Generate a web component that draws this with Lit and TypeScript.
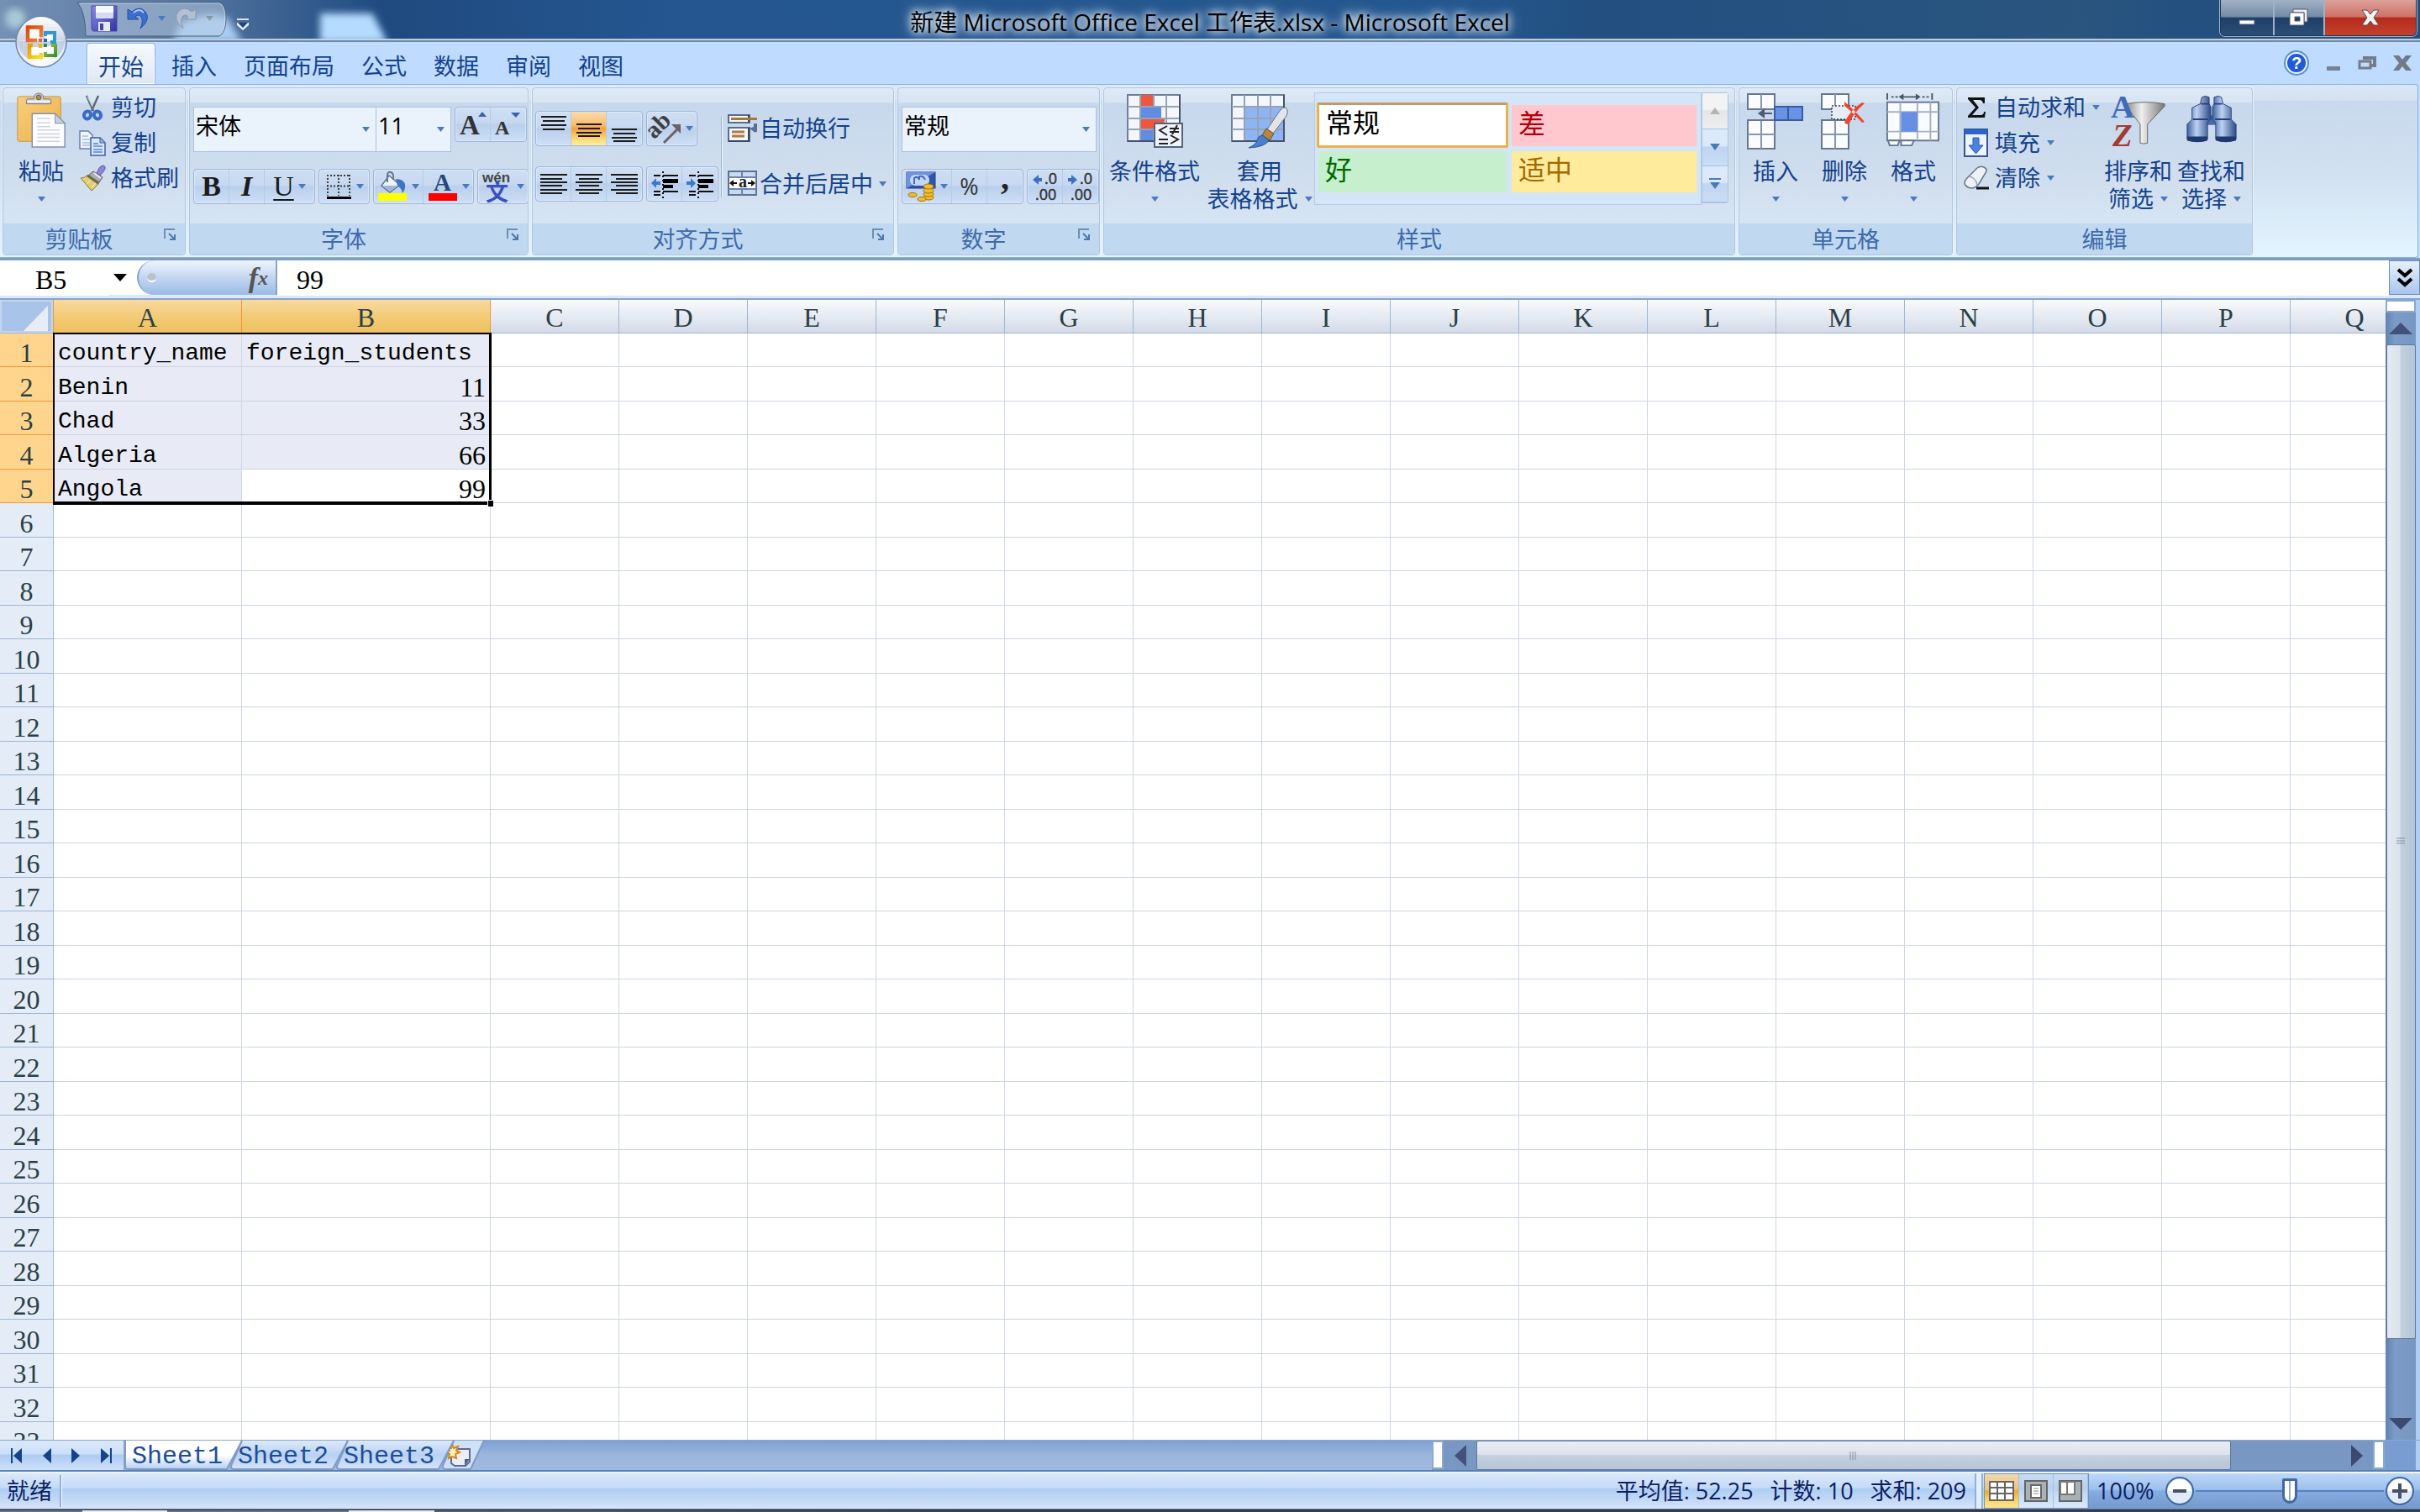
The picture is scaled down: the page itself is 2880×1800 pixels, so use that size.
import { LitElement, html, svg, css, nothing } from "lit";
import { customElement } from "lit/decorators.js";
import { classMap } from "lit/directives/class-map.js";

const COLUMNS = "ABCDEFGHIJKLMNOPQ".split("");
const ROW_COUNT = 33;
const DATA: [string, string | number][] = [
  ["country_name", "foreign_students"],
  ["Benin", 11],
  ["Chad", 33],
  ["Algeria", 66],
  ["Angola", 99],
];
const TABS = ["开始", "插入", "页面布局", "公式", "数据", "审阅", "视图"];

const caret = html`<svg class="caret" width="9" height="6" viewBox="0 0 9 6"><path d="M0 0h9L4.500 6z" fill="#4a7abb"/></svg>`;

/* Horizontal text-line glyphs, each entry is [x, y, width]. */
const lines = (rows: number[][]) => html`<svg width="34" height="34" viewBox="0 0 34 34">
  ${rows.map(([x, y, w]) => svg`<rect x=${x} y=${y} width=${w} height="2" fill="#1c1c1c"/>`)}
</svg>`;

const vTop = lines([[2, 2, 30], [4, 7, 26], [2, 12, 30], [4, 17, 26]]);
const vMid = lines([[2, 11, 30], [4, 16, 26], [2, 21, 30], [4, 25, 26]]);
const vBot = lines([[2, 17, 30], [4, 22, 26], [2, 27, 30], [4, 31, 26]]);
const hRows = [5, 10, 14, 18, 23, 27];
const hLeft = lines(hRows.map((y, i) => [1, y, i % 2 ? 26 : 32]));
const hMid = lines(hRows.map((y, i) => (i % 2 ? [5, y, 24] : [1, y, 32])));
const hRight = lines(hRows.map((y, i) => (i % 2 ? [7, y, 26] : [1, y, 32])));

const officeLogo = html`<svg width="62" height="62" viewBox="0 0 62 62">
  <defs>
    <radialGradient id="ob" cx=".5" cy=".8" r=".8"><stop offset="0" stop-color="#fff"/><stop offset=".5" stop-color="#eef1f6"/><stop offset="1" stop-color="#aab9d2"/></radialGradient>
    <linearGradient id="og" x1="0" y1="0" x2="0" y2="1"><stop offset="0" stop-color="#fff"/><stop offset="1" stop-color="#cfd6e4"/></linearGradient>
    <linearGradient id="or" x1="0" y1="0" x2="1" y2="1"><stop offset="0" stop-color="#d9480f"/><stop offset="1" stop-color="#f5853c"/></linearGradient>
    <linearGradient id="oy" x1="0" y1="0" x2="1" y2="1"><stop offset="0" stop-color="#ee9c00"/><stop offset="1" stop-color="#ffd91f"/></linearGradient>
    <linearGradient id="ogr" x1="0" y1="0" x2="1" y2="1"><stop offset="0" stop-color="#9ccb3b"/><stop offset="1" stop-color="#3f8f35"/></linearGradient>
  </defs>
  <circle cx="31" cy="31" r="30" fill="url(#ob)" stroke="#7287ab" stroke-width="1.500"/>
  <path d="M3 29a28 28 0 0 1 56 0z" fill="url(#og)"/>
  <path d="M3 30h56q-2 15-12 21-3-14-16-14T15 51Q5 45 3 30z" fill="#b9c7e0" opacity=".75"/>
  <path d="M17 16h12v12H17zM36 21h9v8h-9zM19 37h10v11H19zM35 36h11v10H35z" fill="#fff"/>
  <g fill="none">
    <path d="M26 29H15V13.500h16V25" stroke="url(#or)" stroke-width="4.500"/>
    <path d="M36 24v-4h11v11h-5" stroke="#2e97d6" stroke-width="4"/>
    <path d="M21 35h-4v14h14v-5" stroke="url(#oy)" stroke-width="4.500"/>
    <path d="M43 35h5v12H36v-4" stroke="url(#ogr)" stroke-width="4"/>
  </g>
  <path d="M28 27h4v4h-4z" fill="#e8622a"/><path d="M34 27h4v4h-4z" fill="#1c68b8"/><path d="M28 33h4v5h-4z" fill="#f7b500"/><path d="M34 33h4v4h-4z" fill="#2f8a3c"/>
</svg>`;

const saveIcon = html`<svg width="32" height="32" viewBox="0 0 32 32">
  <defs><linearGradient id="sv" x1="0" x2="1" y1="0" y2="1"><stop offset="0" stop-color="#8a8be0"/><stop offset=".5" stop-color="#5c60c8"/><stop offset="1" stop-color="#33349c"/></linearGradient></defs>
  <path d="M1 1h30v30H3l-2-2z" fill="url(#sv)" stroke="#4446a4"/>
  <path d="M6 1h21v13q0 2-2 2H8q-2 0-2-2z" fill="#f7f9fe"/><path d="M6 9h21v5q0 2-2 2H8q-2 0-2-2z" fill="#d5dcf0"/>
  <path d="M9 20h14v11H9z" fill="#e6e8f3"/><path d="M11 22h4v8h-4z" fill="#4144a0"/>
</svg>`;
const undoIcon = html`<svg width="26" height="26" viewBox="0 0 26 26">
  <path d="M1 2l5 3Q15-3 22 5q7 9-6 20 4-9 1-14-3-4-7 0l4 3H1z" fill="#3b6fcf" stroke="#2450a4"/><path d="M8 6q7-6 12 0" stroke="#a9c4f2" stroke-width="2" fill="none"/>
</svg>`;
const redoIcon = html`<svg width="26" height="26" viewBox="0 0 26 26">
  <path d="M25 2l-5 3Q11-3 4 5q-7 9 6 20Q6 16 9 11q3-4 7 0l-4 3h13z" fill="#b3c0d2" stroke="#8797b0"/>
</svg>`;

const pasteIcon = html`<svg width="62" height="68" viewBox="0 0 62 68">
  <defs><linearGradient id="pb" x1="0" y1="0" x2="1" y2="1"><stop offset="0" stop-color="#f9cf7c"/><stop offset="1" stop-color="#eab04a"/></linearGradient></defs>
  <rect x="2" y="4" width="53" height="55" rx="2" fill="url(#pb)" stroke="#c2954a"/>
  <path d="M13 13V9q0-2 2-2h7q0-7 6-7t6 7h7q2 0 2 2v4z" fill="#c9ced6" stroke="#6f7883"/><circle cx="28" cy="5" r="3" fill="#b98a3c" stroke="#6f5a35"/><path d="M14 9h28v2H14z" fill="#f8f9fb"/>
  <path d="M20 25h28l12 12v29H20z" fill="#fdfdff" stroke="#8391a8" stroke-width="1.500"/><path d="M48 25v12h12z" fill="#c5d0e0" stroke="#8391a8"/>
  <path d="M26 31h16M26 36h16M26 41h16M26 45h28M26 50h28M26 54h28M26 59h28" stroke="#cfd3dc" stroke-width="1.500"/>
</svg>`;
const cutIcon = html`<svg width="32" height="32" viewBox="0 0 32 32">
  <path d="M9 2l8 18M23 2l-8 18" stroke="#5c6a7c" stroke-width="2.500"/><path d="M10 3l6 12" stroke="#dfe5ee"/>
  <ellipse cx="10" cy="25" rx="4" ry="4.500" transform="rotate(25 10 25)" fill="none" stroke="#3a6bcb" stroke-width="4"/>
  <ellipse cx="22" cy="25" rx="4" ry="4.500" transform="rotate(-25 22 25)" fill="none" stroke="#3a6bcb" stroke-width="4"/>
</svg>`;
const copyIcon = html`<svg width="32" height="32" viewBox="0 0 32 32">
  <path d="M1 2h10l5 5v16H1z" fill="#f2f6fe" stroke="#6a7fae" stroke-width="1.500"/><path d="M4 8h7M4 12h9M4 16h9M4 19h9" stroke="#7f9cdc"/>
  <path d="M14 10h11l6 6v15H14z" fill="#dbe7fc" stroke="#3c5f9f" stroke-width="1.500"/><path d="M25 10v6h6z" fill="#9db8ea" stroke="#3c5f9f"/><path d="M17 17h6M17 20h11M17 24h11M17 27h11" stroke="#5c86d0" stroke-width="1.500"/>
</svg>`;
const brushIcon = html`<svg width="32" height="32" viewBox="0 0 32 32">
  <path d="M21 10l3-6q2-3 5-3 3 1 2 4t-6 8z" fill="#8f86d2" stroke="#6259ab"/>
  <path d="M17 8l11 7-4 6-13-8z" fill="#a9aeb8" stroke="#55595f"/><path d="M18 10l8 6" stroke="#e9ecf2" stroke-width="2"/>
  <path d="M11 12l13 9q-3 5-9 10Q9 24 2 16q5 0 9-4z" fill="#e2cd74" stroke="#8b7a34"/><path d="M15 28l6-8M10 23l6-8" stroke="#faf0b8"/><path d="M11 12l13 9-1 3-14-10z" fill="#6d6a4a"/>
</svg>`;

const growA = (big: boolean) => html`<svg width="34" height="34" viewBox="0 0 34 34">
  <text x="1" y="29" font-family="Liberation Serif, serif" font-weight="700" font-size=${big ? 33 : 24} fill="#333">A</text>
  ${big ? svg`<path d="M23 8l5-6 5 6z" fill="#3b62b0"/>` : svg`<path d="M20 3h11l-5 6z" fill="#3b62b0"/>`}
</svg>`;
const borderIcon = html`<svg width="32" height="32" viewBox="0 0 32 32">
  <path d="M2 3h28M2 15.500h28M3 2v25M29 2v25M16 2v25" stroke="#3c3c3c" stroke-width="2" stroke-dasharray="2 2" fill="none"/>
  <path d="M2 28h29v3H2z" fill="#000"/>
</svg>`;
const fillIcon = html`<svg width="36" height="36" viewBox="0 0 36 36">
  <path d="M14 5l13 11-12 9L5 17z" fill="#eef3fa" stroke="#5c6f90" stroke-width="1.500"/><path d="M12 13V5q0-5 4-4t3 9" fill="none" stroke="#66748f" stroke-width="2"/>
  <path d="M22 9q9 0 11 6 1 6-3 11-1-6-6-9z" fill="#3f74c6"/><path d="M7 17h18l-10 7z" fill="#9db7e2"/>
  <path d="M1 26h34v9H1z" fill="#ff0"/>
</svg>`;
const fontColorIcon = html`<svg width="36" height="36" viewBox="0 0 36 36">
  <text x="7" y="23" font-family="Liberation Serif, serif" font-weight="700" font-size="29" fill="#27467f">A</text><path d="M1 26h34v9H1z" fill="red"/>
</svg>`;
const wenIcon = html`<svg width="36" height="36" viewBox="0 0 36 36">
  <text x="0" y="13" font-family="Liberation Sans, sans-serif" font-weight="700" font-size="17" fill="#444">wén</text>
  <text x="4" y="35" font-family="Noto Sans CJK SC, sans-serif" font-weight="700" font-size="27" fill="#3a4fc0">文</text>
</svg>`;
const orientIcon = html`<svg width="36" height="36" viewBox="0 0 36 36">
  <g transform="rotate(-45 14 18)"><text x="-3" y="20" font-family="Liberation Serif, serif" font-weight="700" font-size="29" fill="#3f3f3f">ab</text></g>
  <path d="M15 35L31 19" stroke="#6b6168" stroke-width="3"/><path d="M24 13h11v11z" fill="#6b6168"/>
</svg>`;
const indentIcon = (right: boolean) => html`<svg width="34" height="34" viewBox="0 0 34 34">
  <path d="M4 7h8M15 7h18M4 26h8M15 26h18M4 30h8" stroke="#111" stroke-width="2"/><path d="M15 11h18v5H15zM15 18h12v4H15z" fill="#000"/><path d="M15 2v32" stroke="#111" stroke-width="2" stroke-dasharray="2 3"/>
  ${right ? svg`<path d="M1 14h5v-4l6 6-6 6v-4H1z" fill="#3b78d2"/>` : svg`<path d="M12 14H7v-4l-6 6 6 6v-4h5z" fill="#3b78d2"/>`}
</svg>`;
const wrapIcon = html`<svg width="36" height="34" viewBox="0 0 36 34">
  <rect x="1" y="1" width="25" height="9" fill="#f4f7fb" stroke="#5a6d88" stroke-width="2"/><path d="M25 1v9" stroke="#38485f" stroke-width="2"/><path d="M4 5.500h31" stroke="#a9743e" stroke-width="3"/>
  <rect x="1" y="16" width="25" height="16" fill="#f4f7fb" stroke="#5a6d88" stroke-width="2"/><path d="M25 16v16H1" fill="none" stroke="#38485f" stroke-width="2"/><path d="M5 21h15M5 26h15" stroke="#b07a48" stroke-width="3"/>
  <path d="M33 11v8h-2" stroke="#5a6f92" stroke-width="4" fill="none"/><path d="M26 17l7-3v8z" fill="#5a6f92"/>
</svg>`;
const mergeIcon = html`<svg width="36" height="32" viewBox="0 0 36 32">
  <rect x="1" y="1" width="33" height="28" fill="#fff" stroke="#5d7290" stroke-width="2"/><path d="M2 2h31v5H2zM2 23h31v5H2z" fill="#c7daf2"/><path d="M1 8h33M1 22h33M17 1v7M17 22v7" stroke="#6b84a8" stroke-width="2"/>
  <path d="M2 15l5-4v3h4v2H7v3zM33 15l-5-4v3h-4v2h4v3z" fill="#111"/>
  <text x="13" y="20" font-family="Liberation Serif, serif" font-weight="700" font-size="20" fill="#222">a</text>
</svg>`;
const moneyIcon = html`<svg width="36" height="36" viewBox="0 0 36 36">
  <rect x="1" y="1" width="34" height="19" fill="#2f55ad" stroke="#23418c"/><path d="M1 1l34 0-34 19z" fill="#6d93dc"/><rect x="5" y="4" width="23" height="13" rx="6" fill="#c4d6f4"/><path d="M10 15V8q4-3 6 2v-4q5-1 7 4" fill="none" stroke="#4469b8" stroke-width="2"/>
  <g fill="#f0bd2e" stroke="#a4720d"><ellipse cx="27" cy="31" rx="6" ry="3"/><ellipse cx="27" cy="27" rx="6" ry="3"/><ellipse cx="27" cy="23" rx="6" ry="3"/><ellipse cx="27" cy="18" rx="6" ry="3"/><ellipse cx="19" cy="33" rx="5" ry="2.500"/><ellipse cx="8" cy="28" rx="5" ry="2.500"/></g>
</svg>`;
const decimalIcon = (right: boolean) => html`<svg width="34" height="36" viewBox="0 0 34 36">
  <g font-family="Open Sans, sans-serif" font-size="18" fill="#333" stroke="#333" stroke-width=".5"><text x="16" y="15">.0</text><text x="5" y="34">.00</text></g>
  ${right ? svg`<path d="M2 8h4V4l7 6-7 6v-4H2z" fill="#3b6fc9"/>` : svg`<path d="M13 8H9V4l-7 6 7 6v-4h4z" fill="#3b6fc9"/>`}
</svg>`;

const gridBase = svg`<rect x="2" y="2" width="62" height="55" fill="#f3f6fb" stroke="#6c7f99" stroke-width="2"/>`;
const gridLines = svg`<path d="M17 2v55M33 2v55M48 2v55M2 16h62M2 30h62M2 43h62" stroke="#94a3b8" stroke-width="2"/><path d="M64 2v55H2" fill="none" stroke="#43536b" stroke-width="2"/>`;
const condIcon = html`<svg width="68" height="66" viewBox="0 0 68 66">
  ${gridBase}${gridLines}<path d="M18 2h14v13H18zM18 31h28v11H18z" fill="#f0553f"/><path d="M18 17h24v12H18zM18 44h14v12H18z" fill="#5f8de6"/>
  <rect x="34" y="36" width="33" height="28" fill="#eff4fb" stroke="#51637f" stroke-width="2"/>
  <path d="M49 39l-9 5 9 6M53 50l9 5-9 5M39 55h11M39 60h11M52 42h11M52 46h11M61 38l-6 11" stroke="#222" stroke-width="2" fill="none"/>
</svg>`;
const tableFormatIcon = html`<svg width="70" height="66" viewBox="0 0 70 66">
  ${gridBase}<path d="M17 16h47v41H17z" fill="#8fb4f4"/>${gridLines}
  <path d="M66 17q4 3 1 10L51 48l-7-5 15-22q3-5 7-4z" fill="#e2e4e8" stroke="#667085"/><path d="M43 42l9 6-5 8-9-6z" fill="#b58543" stroke="#704c1e"/>
  <path d="M38 50l8 6q-4 8-24 9 9-4 10-9 1-5 6-6z" fill="#4c7dcf" stroke="#2a559c"/>
</svg>`;
const cellBox = (x: number, y: number, r: number) => svg`<rect x=${x} y=${y} width="32" height=${r === 1 ? 18 : 34} transform=${r === 1 ? "translate(0 0)" : "translate(0 -1)"} fill="#fafcff" stroke="#66788f" stroke-width="2"/><path d=${`M${x + 16} ${y}v${r === 1 ? 18 : 33}` + (r > 1 ? `M${x} ${y + 16}h32` : "")} stroke="#8696ab" stroke-width="2"/>`;
const insertIcon = html`<svg width="70" height="66" viewBox="0 0 70 66">${cellBox(2, 1, 1)}${cellBox(2, 33, 2)}
  <rect x="34" y="16" width="33" height="16" fill="#6793e6" stroke="#3b5c9c" stroke-width="2"/><path d="M50 16v16" stroke="#3b5c9c" stroke-width="2"/><path d="M31 25v-2h-9v-5l-8 6 8 6v-5z" fill="#4c5d78"/></svg>`;
const deleteIcon = html`<svg width="70" height="66" viewBox="0 0 70 66">${cellBox(8, 1, 1)}${cellBox(8, 33, 2)}
  <path d="M20 15h28v16H20z" fill="#e6edf7" stroke="#333c4c" stroke-width="1.500" stroke-dasharray="2 2"/><path d="M35 10q10 8 24 24l-3 1Q44 22 35 15zM59 12l-3-1Q42 20 35 35q2 3 6 1 4-12 18-24z" fill="#ee452c"/></svg>`;
const formatIcon = html`<svg width="70" height="68" viewBox="0 0 70 68">
  <path d="M3 0v8M58 0v8" stroke="#46566e" stroke-width="2"/><path d="M8 4.500h8M46 4.500h8" stroke="#46566e" stroke-width="2" stroke-dasharray="3 2"/><path d="M17 4.500l6-4v3h15v-3l6 4-6 4v-3H23v3z" fill="#46566e"/>
  <rect x="3" y="11" width="63" height="47" fill="#fafcff" stroke="#66788f" stroke-width="2"/><path d="M19 11v47M40 11v47M56 11v47M3 23h63M3 47h63" stroke="#a4b1c3" stroke-width="2"/>
  <rect x="20" y="23" width="20" height="24" fill="#6590e4"/><path d="M4 58h14l-2 6H6zM20 58h16l-3 6H20z" fill="#fafcff" stroke="#66788f" stroke-width="2"/></svg>`;
const sumIcon = html`<svg width="32" height="32" viewBox="0 0 32 32"><path d="M6 4h20v7h-2q-1-4-4-4h-8l7 9-8 9h10q4 0 4-4h2l-1 7H6v-2l9-10L6 6z" fill="#111"/></svg>`;
const fillDownIcon = html`<svg width="32" height="34" viewBox="0 0 32 34"><rect x="2" y="1" width="27" height="32" fill="#eef4fd" stroke="#35558c" stroke-width="2"/><path d="M2 1h27v6H2z" fill="#2b63cf"/><path d="M12 11h7v9h5l-8.500 10L7 20h5z" fill="#4c83e0" stroke="#2a58ad"/></svg>`;
const eraseIcon = html`<svg width="32" height="32" viewBox="0 0 32 32"><path d="M17 4q4-3 8-1t3 5l-9 15q-4 5-9 5-7-1-8-6 0-3 4-7z" fill="#eef1f6" stroke="#68758c" stroke-width="1.500"/><path d="M7 14q8 1 10 10" fill="none" stroke="#9da9bd" stroke-width="1.500"/><path d="M16 28h15" stroke="#111" stroke-width="3"/></svg>`;
const sortIcon = html`<svg width="68" height="68" viewBox="0 0 68 68">
  <defs><linearGradient id="fn" x1="0" x2="1"><stop offset="0" stop-color="#8f8f8f"/><stop offset=".4" stop-color="#efefef"/><stop offset="1" stop-color="#777"/></linearGradient></defs>
  <path d="M19 13q23-4 47 0v3L45 38v23q-5 2-9 0V38L19 16z" fill="url(#fn)" stroke="#666"/>
  <text x="0" y="30" font-family="Liberation Serif, serif" font-weight="700" font-size="40" fill="#3f6cb9">A</text>
  <text x="2" y="65" font-family="Liberation Serif, serif" font-weight="700" font-style="italic" font-size="40" fill="#a33a34">Z</text>
</svg>`;
const findIcon = html`<svg width="64" height="68" viewBox="0 0 64 68">
  <defs><linearGradient id="bn" x1="0" x2="1"><stop offset="0" stop-color="#40619f"/><stop offset=".4" stop-color="#bdd2f3"/><stop offset="1" stop-color="#2b4a86"/></linearGradient></defs>
  <path d="M25 27h14v12H25z" fill="#4a6cab"/>
  <g stroke="#2b4478"><path fill="url(#bn)" d="M20 5q4-3 9 0v8l2 4v15l-4 4v20q-1 3-12 3T2 57V38l6-6V18l10-5z"/><path fill="url(#bn)" d="M44 5q-4-3-9 0v8l-2 4v15l4 4v20q1 3 12 3t13-3V38l-6-6V18l-10-5z"/></g>
  <path d="M2 53h25v5q-12 4-25 0zM37 53h25v5q-13 4-25 0z" fill="#1f3a70"/><path d="M19 13h10M35 13h10M9 32h19M36 32h19" stroke="#24417c" stroke-width="2"/>
</svg>`;
const launcher = html`<svg width="16" height="16" viewBox="0 0 16 16"><path d="M2 13V2h12" fill="none" stroke="#6a8fb8" stroke-width="2"/><path d="M7 7l7 7M14 8v6H8" stroke="#4f78a8" stroke-width="2" fill="none"/></svg>`;

@customElement("app-root")
export class AppRoot extends LitElement {
  static styles = css`
    :host { display: block; font: 27px/34px "Open Sans", "Noto Sans CJK SC", sans-serif; color: #15428b; }
    * { box-sizing: border-box; }
    button, input, select { font: inherit; color: inherit; border: 0; margin: 0; padding: 0; background: none; border-radius: 0; outline: 0; }
    button { display: flex; align-items: center; justify-content: center; white-space: nowrap; }
    svg { display: block; flex: none; overflow: visible; }
    .app { display: flex; flex-direction: column; height: 100vh; overflow: hidden; background: #bfdbff; }

    .title { position: relative; display: flex; justify-content: space-between; align-items: flex-start; height: 50px; overflow: hidden; background: linear-gradient(90deg, #7590b4 0, #4f719d 250px, #1f4a80 460px, #25568f 800px, #24578f 60%, #224f80 66%, #29557f 86%, #23507f 90%); border-bottom: 2px solid #72889c; box-shadow: inset 0 -2px 0 #b8cde0; }
    .scene { position: absolute; left: 0; top: 0; }
    .qat { position: relative; display: flex; align-items: center; gap: 11px; height: 46px; margin-left: 92px; width: 178px; padding: 0 0 2px 16px; }
    .qat .dim { opacity: .45; }
    .qatmore { position: relative; margin: 21px auto 0 12px; }
    .name { position: absolute; left: 0; right: 0; top: 9px; margin: 0; text-align: center; font-size: 28px; font-weight: 400; line-height: 34px; color: #000; text-shadow: 0 0 8px #fff, 0 0 12px #dce9f7, 0 0 18px #c2d8ee; }
    .win { position: relative; display: flex; height: 43px; margin-right: 4px; border: 1px solid #20354f; border-top: 0; border-radius: 0 0 6px 6px; overflow: hidden; box-shadow: 0 0 0 1px #9cb3cc; }
    .win button { height: 100%; width: 64px; border-right: 2px solid #9fb2c8; background: linear-gradient(#a3b2c5, #7389a5 48%, #1e3e66 50%, #2b4f78); }
    .win .max { width: 60px; }
    .win .close { width: 108px; border-right: 0; background: linear-gradient(#dda19a, #cd7167 48%, #b52a1b 50%, #c5402d); }

    .tabs { position: relative; display: flex; align-items: flex-end; height: 50px; flex: none; padding-left: 103px; gap: 6px; background: #bfdbff; }
    .tab { height: 50px; padding: 8px 13px 0; color: #15428b; border-radius: 4px 4px 0 0; }
    .tab.on { height: 49px; border: 1px solid #8db2e3; border-bottom: 0; background: linear-gradient(#f6faff, #dde8f5); box-shadow: inset 0 0 0 1px #fff; }
    .mdi { display: flex; align-items: center; gap: 20px; margin: 0 10px 10px auto; }
    .orb { position: absolute; z-index: 2; left: 18px; top: -31px; }

    .ribbon { display: flex; flex: none; gap: 4px; height: 207px; margin-right: 2px; padding: 3px 3px 2px; border: 1px solid #8db2e3; border-width: 1px 1px 1px 0; border-radius: 0 4px 4px 0; background: linear-gradient(#dbe7f5, #d5e1f0 18px, #c9d9ed 20px, #d2e1f1 110px, #e3f5ff); }
    .group { display: flex; flex-direction: column; height: 200px; border: 1px solid #adc6df; border-radius: 4px; overflow: hidden; box-shadow: 0 0 0 1px #e6f1fb; background: linear-gradient(#dfeaf6, #d8e4f2 17px, #c7d8ed 18px, #d0deee 110px, #dae9f6); }
    .body { display: flex; flex: 1; min-height: 0; align-items: flex-start; }
    .cap { position: relative; display: flex; flex: none; align-items: center; justify-content: center; height: 37px; background: #c1d8f1; color: #3e6aaa; }
    .cap button { position: absolute; right: 10px; top: 5px; }
    .cap.launch { padding-right: 36px; }
    .w-clip { width: 218px; } .w-font { width: 404px; } .w-align { width: 431px; } .w-num { width: 241px; }
    .w-style { width: 752px; } .w-cells { width: 255px; } .w-edit { width: 353px; }
    .w-cells .body { padding-left: 2px; }

    .big { flex-direction: column; padding-top: 6px; line-height: 33px; }
    .big > svg:first-child { height: 66px; margin-bottom: 10px; }
    .big > .caret { margin-top: 14px; }
    .row2 { display: flex; align-items: center; gap: 8px; }
    .paste { width: 90px; } .b-cond { width: 120px; } .b-table { width: 130px; } .b-cell { width: 82px; } .b-find { width: 87px; }
    .list { display: flex; flex-direction: column; padding-top: 2px; }
    .list button { height: 42px; gap: 6px; justify-content: flex-start; }
    .list .caret { margin-left: 2px; }
    .edit { width: 172px; padding-left: 7px; }

    .stack { display: flex; flex-direction: column; }
    .f-font { padding: 22px 0 0 4px; gap: 20px; }
    .f-align { padding: 27px 0 0 3px; gap: 24px; }
    .line { display: flex; align-items: flex-start; gap: 4px; }
    .sels { display: flex; height: 54px; }
    .sel { display: grid; height: 54px; border: 1px solid #abc1de; background: #eaf2fb; }
    .sel select { grid-area: 1 / 1; width: 100%; appearance: none; padding: 0 0 8px 2px; color: #000; }
    .sel .caret { grid-area: 1 / 1; align-self: center; justify-self: end; margin-right: 7px; pointer-events: none; }
    .s1 { width: 218px; } .s2 { width: 89px; border-left: 0; } .s3 { width: 232px; }
    .pack { display: flex; height: 42px; border: 1px solid #9ab6dd; border-radius: 4px; background: linear-gradient(#cfdff3, #c6d8f0 46%, #bacfec 50%, #cddff5); box-shadow: inset 0 0 0 1px rgba(255,255,255,.35); }
    .pack button { height: 100%; min-width: 42px; gap: 5px; border-right: 1px solid #b5cbe8; }
    .pack button:last-child { border-right: 0; }
    .pack .wide { width: 59px; }
    .pack .lit { background: linear-gradient(#fbdbb0, #f9bd6c 40%, #f5a13a 50%, #fddf7f 85%, #ffeea0); }
    .b, .i, .u { font: 700 34px/38px "Liberation Serif", serif; color: #1b1b1b; }
    .i { font-style: italic; } .u { font-weight: 400; text-decoration: underline; text-decoration-thickness: 2px; text-underline-offset: 4px; }
    .pct { color: #333; }
    .comma { font: 700 40px/8px "Liberation Serif", serif; color: #222; align-items: flex-start; padding-top: 6px; }
    .rule { width: 2px; height: 96px; margin: 34px 6px 0 3px; background: #9ab5da; border-right: 1px solid #eef5fc; }
    .f-text { padding: 27px 0 0; gap: 24px; }
    .txt { height: 42px; gap: 2px; justify-content: flex-start; }
    .txt .caret { margin-left: 5px; }

    .gallery { display: grid; grid-template: 51px 51px / 228px 1fr; align-content: center; column-gap: 2px; row-gap: 4px; flex: 1; height: 134px; margin: 5px 0 0; padding: 0 3px 0 2px; border: 1px solid #b5cdea; background: #d4e5f7; }
    .gallery button { justify-content: flex-start; margin: 1px 2px; padding: 0 0 6px 8px; font-size: 32px; color: #000; background: #fff; }
    .gallery .sel-style { margin: -2px 0 -1px; padding-left: 8px; border: 3px solid #f0b04a; border-top-color: #c39a68; border-radius: 3px; }
    .gallery .bad { color: #b0000c; background: #ffc7ce; }
    .gallery .good { color: #006a00; background: #c6efce; }
    .gallery .neutral { color: #a26a00; background: #ffeb9c; }
    .gscroll { display: flex; flex-direction: column; width: 32px; height: 132px; margin: 5px 7px 0 0; border: 1px solid #a9c3e6; border-radius: 0 3px 3px 0; }
    .gscroll button { flex: 1; background: linear-gradient(#dce9fa 45%, #c0d5f1 50%, #cbddf5); border-bottom: 1px solid #a9c3e6; }
    .gscroll button:first-child { background: linear-gradient(#f3f3f3 45%, #e4e6e9 50%, #eee); }

    .fbar { display: flex; flex: none; height: 50px; padding-bottom: 4px; border-top: 3px solid #7d9dc6; border-bottom: 2px solid #86a5cc; background: #dbe8f8; }
    .fbar input { font: 32px/40px "Liberation Serif", serif; color: #000; background: #fff; height: 42px; padding-top: 4px; }
    .fbar .nb { width: 130px; padding-left: 42px; }
    .nbtn { width: 33px; padding-right: 8px; background: #fff; }
    .pillwrap { width: 167px; background: #fff; display: flex; border-right: 2px solid #86a5cc; }
    .pill { display: flex; flex: 1; align-items: center; justify-content: space-between; padding: 0 9px 0 10px; border-left: 2px solid #86a5cc; border-radius: 21px 0 0 21px; background: linear-gradient(#eef5fd, #c3d6f0 50%, #9cbbe6); }
    .dot { width: 11px; height: 11px; border-radius: 50%; background: #b9c3d0; border-bottom: 2px solid #fff; }
    .fx { font: italic 700 34px/36px "Liberation Serif", serif; color: #555; }
    .fx small { font-size: 24px; }
    .fbar .fin { flex: 1; min-width: 0; padding-left: 23px; }
    .expand { width: 37px; border: 1px solid #6b8dbb; background: linear-gradient(#e8f1fc, #a9c5ec); }

    .main { display: flex; flex: 1; min-height: 0; background: #b0cdf3; }
    .sheet { position: relative; flex: 1; min-width: 0; overflow: hidden; background: #fff; }
    table { border-collapse: separate; border-spacing: 0; table-layout: fixed; width: 2879px; }
    .c-head { width: 64px; } .c-a { width: 224px; } .c-b { width: 296px; } .c-n { width: 153px; }
    th, td { padding: 0; overflow: hidden; white-space: nowrap; font: 32px/36px "Liberation Serif", serif; }
    thead th { height: 40px; padding-top: 3px; color: #2b3f45; background: linear-gradient(#f8fafc, #e6ebf3 50%, #d3dbe9); border-right: 1px solid #9eb6d4; border-bottom: 1px solid #9eb6d4; }
    thead th.hot { background: linear-gradient(#f9d99f, #f2c970 60%, #eec062); border-color: #f29536; }
    thead th.corner { padding: 0; background: #a9c4e9; border-color: #f29536 #f29536 #9eb6d4; box-shadow: inset 0 0 0 2px #c2d6f1; }
    .corner svg { margin: 4px 0 0 27px; }
    tbody th { height: 40px; background: #e4ecf7; color: #2b3f45; border-right: 1px solid #9eb6d4; border-bottom: 1px solid #9eb6d4; line-height: 32px; vertical-align: bottom; }
    tbody tr:nth-child(even) th { height: 41px; }
    tbody th.hot { background: #ffd58d; border-color: #f29536; }
    td { border-right: 1px solid #d0d7e5; border-bottom: 1px solid #ccd4e3; color: #000; vertical-align: bottom; line-height: 32px; padding: 0 5px; }
    td.picked { background: #e8ebf5; }
    td.text { font-family: "Liberation Mono", monospace; font-size: 28px; line-height: 30px; }
    td.num { text-align: right; }
    .frame { position: absolute; left: 63px; top: 39px; width: 522px; height: 205px; border: 4px solid #000; border-width: 2px 3px 4px 2px; pointer-events: none; }
    .knob { position: absolute; right: -5px; bottom: -6px; width: 7px; height: 8px; background: #000; border: 1px solid #fff; border-width: 1px 0 0 1px; }

    .vs { display: flex; flex-direction: column; align-items: center; width: 36px; margin-right: 5px; background: linear-gradient(90deg, #5f82b1, #7c9bc6 30%, #7797c3); }
    .split { width: 100%; height: 15px; border: 2px solid #8aa9d0; background: #fff; }
    .vs button { height: 38px; width: 100%; }
    .vthumb { display: flex; align-items: center; justify-content: center; width: 35px; flex: 1184; border: 1px solid #6278a0; border-radius: 2px; background: linear-gradient(90deg, #e3e9f1, #dce3ed 45%, #c2cfde 50%, #b6c5d7); }
    .vrest { flex: 82; }

    .bottom { display: flex; flex: none; height: 38px; border-top: 1px solid #8aa6cc; border-bottom: 2px solid #5a80b5; background: linear-gradient(#7d9fd0, #9bb6dd 50%, #a0b9de); }
    .nav { display: flex; align-items: center; justify-content: space-between; width: 148px; padding: 0 14px 0 13px; background: linear-gradient(#dbe8fa, #cbdff9 45%, #aecbf3 50%, #cfe0f8); border-right: 1px solid #8aa6cc; }
    .st { position: relative; width: 126px; color: #1d4c98; font: 30px/34px "Liberation Mono", monospace; padding-top: 3px; }
    .st .shape { position: absolute; left: 0; top: 0; }
    .st span { position: relative; }
    .hs { display: flex; flex: none; margin-left: auto; width: calc(41% - 5px); background: #7897c3; }
    .hsplit { width: 14px; margin: 0 0 1px; border: 2px solid #8aa9d0; background: #fff; }
    .hs button { width: 39px; }
    .hthumb { display: flex; align-items: center; justify-content: center; flex: 898; border: 1px solid #6278a0; border-radius: 2px; background: linear-gradient(#e9edf3, #dde3ec 48%, #c5d1de 50%, #b5c4d6); }
    .hrest { flex: 130; }
    .endcap { width: 42px; background: linear-gradient(90deg, #7a9dd1 37px, #b0cdf3 37px); }

    .status { display: flex; align-items: center; flex: none; height: 45px; border-top: 2px solid #eef5ff; background: linear-gradient(#dbe8fb, #c6dbf8 40%, #aecdf4 45%, #c3d9f6 75%, #d6e4f6); color: #0c1e60; border-bottom: 1px solid #6d88ad; }
    .status .ready { padding: 0 9px 0 8px; border-right: 2px solid #8eb0dc; height: 38px; line-height: 38px; box-shadow: 1px 0 0 #fff; }
    .calc { display: flex; gap: 20px; margin-left: auto; padding-right: 10px; }
    .sepbar { width: 10px; align-self: stretch; background: #e3eefc; border: 2px solid #8eb0dc; border-width: 0 2px; margin-right: 1px; }
    .views { display: flex; align-self: stretch; border: 1px solid #6f92c4; }
    .views button { width: 41px; background: linear-gradient(#c8dbf4, #b9d0ee 45%, #bdd5f4 50%, #dbe9fb); border-right: 1px solid #a5c0e3; }
    .views button.lit { background: linear-gradient(#f2d7ac, #ecc37d 45%, #e9ab33 50%, #fbd66e 80%, #fde590); }
    .zoom { display: flex; align-items: center; align-self: stretch; padding: 0 6px 0 9px; background: linear-gradient(#bed7f8, #9dc0ee 45%, #85ace2 50%, #7499cf); }
    .zoom output { width: 81px; color: #0c1e60; }
    .zoom input { appearance: none; width: 224px; height: 32px; margin: 0 1px; background: linear-gradient(#5b82bb, #5b82bb) center / 100% 2px no-repeat; }
    .zoom input::-webkit-slider-thumb { appearance: none; width: 18px; height: 30px; border: 3px solid #44689d; border-radius: 2px 2px 9px 9px; background: linear-gradient(90deg, #fff 40%, #8fa9cf 40% 60%, #fff 60%); }
    .edge { flex: none; height: 3px; background: linear-gradient(90deg, #6b7786 98px, #e8ebee 98px 199px, #6b7786 199px 415px, #e8ebee 415px 517px, #5a6470 517px, #39434f 40%); border-top: 1px solid #222b36; }
  `;

  private group(cls: string, label: string, body: unknown, launch = true) {
    return html`<section class="group ${cls}" aria-label=${label}>
      <div class="body">${body}</div>
      <div class=${classMap({ cap: true, launch })}>
        <span>${label}</span>${launch ? html`<button aria-label="${label}选项">${launcher}</button>` : nothing}
      </div>
    </section>`;
  }

  private big(icon: unknown, width: string, first: string, second = "") {
    return html`<button class="big ${width}">${icon}<span>${first}</span>${second
      ? html`<span class="row2">${second}${caret}</span>` : caret}</button>`;
  }

  private sheetTab(name: string, active: boolean) {
    return html`<button class="st">
      <svg class="shape" width="144" height="36" viewBox="0 0 144 36">
        <defs><linearGradient id=${"t" + name} x1="0" y1="0" x2="0" y2="1">
          ${active ? svg`<stop offset=".5" stop-color="#fff"/><stop offset="1" stop-color="#b5d0f3"/>`
            : svg`<stop offset="0" stop-color="#dce9fa"/><stop offset=".5" stop-color="#b9d2f4"/><stop offset="1" stop-color="#d3e3f9"/>`}
        </linearGradient></defs>
        <path d=${active ? "M1 0V31q0 3 4 3H122L140 0" : "M14 0L1 30q-1 4 4 4H122L140 0"} fill=${`url(#t${name})`} stroke="#7f9cc6" stroke-width="2"/>
      </svg><span>${name}</span></button>`;
  }

  private row(r: number) {
    const entry = DATA[r];
    return html`<tr>
      <th scope="row" class=${classMap({ hot: !!entry })}>${r + 1}</th>
      ${COLUMNS.map((_, c) => {
        const value = entry?.[c];
        return html`<td class=${classMap({
          picked: c < 2 && !!entry && !(r === 4 && c === 1),
          text: typeof value === "string", num: typeof value === "number",
        })}>${value ?? nothing}</td>`;
      })}
    </tr>`;
  }

  render() {
    return html`<div class="app">
      <header class="title">
        <svg class="scene" width="520" height="50" viewBox="0 0 520 50">
          <defs><filter id="soft"><feGaussianBlur stdDeviation="4"/></filter></defs>
          <g filter="url(#soft)"><circle cx="18" cy="22" r="12" fill="#a9cbd8"/><path d="M205 50l10-22q30-16 55-8l18 30z" fill="#a8cdf2"/><path d="M381 50V16h62l18 34z" fill="#b5dcff"/></g>
          <path d="M92 3h170q7 3 7 19t-8 21H102Q102 14 92 3z" fill="#bccde4" fill-opacity=".5" stroke="#4b5f7c"/><path d="M95 4h166q7 3 7 18t-7 20" fill="none" stroke="#dfe9f5" stroke-opacity=".6"/>
        </svg>
        <div class="qat">
          <button aria-label="保存">${saveIcon}</button>
          <button aria-label="撤消">${undoIcon}</button>${caret}
          <button aria-label="恢复">${redoIcon}</button>
          <svg class="dim" width="9" height="6" viewBox="0 0 9 6"><path d="M0 0h9L4.500 6z" fill="#666"/></svg>
        </div>
        <button class="qatmore" aria-label="自定义快速访问工具栏"><svg width="14" height="16" viewBox="0 0 14 16"><path d="M0 2h14" stroke="#d7e3f0" stroke-width="2"/><path d="M0 6h14v3l-7 6-7-6z" fill="#e8f0f8"/><path d="M1 6h12l-6 6z" fill="#1d4380"/></svg></button>
        <h1 class="name">新建 Microsoft Office Excel 工作表.xlsx - Microsoft Excel</h1>
        <div class="win">
          <button aria-label="最小化"><svg width="20" height="22" viewBox="0 0 20 22"><rect x="1" y="14" width="18" height="5" fill="#fff" stroke="#4c5a6e"/></svg></button>
          <button class="max" aria-label="还原"><svg width="24" height="22" viewBox="0 0 24 22"><path d="M5 1h17v15h-4V5H5z" fill="#eee" stroke="#4c5a6e"/><path d="M1 5h17v15H1zM7 10v5h6v-5z" fill="#fff" fill-rule="evenodd" stroke="#4c5a6e"/></svg></button>
          <button class="close" aria-label="关闭"><svg width="22" height="20" viewBox="0 0 22 20"><path d="M1 1h6l4 5 4-5h6l-6 9 6 9h-6l-4-5-4 5H1l6-9z" fill="#f4f4f4" stroke="#5c4a50"/></svg></button>
        </div>
      </header>

      <nav class="tabs">
        <button class="orb" aria-label="Office 按钮">${officeLogo}</button>
        ${TABS.map((t, i) => html`<button class=${classMap({ tab: true, on: i === 0 })}>${t}</button>`)}
        <div class="mdi">
          <button aria-label="帮助"><svg width="30" height="30" viewBox="0 0 30 30"><circle cx="15" cy="15" r="14" fill="#e9f2fe" stroke="#5a8fcf" stroke-width="2"/><circle cx="15" cy="15" r="11" fill="#1f5bd8"/><text x="9" y="22" font-family="Liberation Sans, sans-serif" font-weight="700" font-size="20" fill="#fff">?</text></svg></button>
          <button aria-label="最小化窗口"><svg width="18" height="18" viewBox="0 0 18 18"><path d="M1 13h16v5H1z" fill="#76828f"/></svg></button>
          <button aria-label="还原窗口"><svg width="22" height="18" viewBox="0 0 22 18"><path d="M6 3h14v9h-4" fill="none" stroke="#727d89" stroke-width="4"/><path d="M2 7h13v8H2z" fill="none" stroke="#727d89" stroke-width="3"/></svg></button>
          <button aria-label="关闭窗口"><svg width="22" height="20" viewBox="0 0 22 20"><path d="M0 1h7l4 5 4-5h7l-7 9 7 9h-7l-4-5-4 5H0l7-9z" fill="#6f7b88"/></svg></button>
        </div>
      </nav>

      <div class="ribbon">
        ${this.group("w-clip", "剪贴板", html`
          ${this.big(pasteIcon, "paste", "粘贴")}
          <div class="list"><button>${cutIcon}剪切</button><button>${copyIcon}复制</button><button>${brushIcon}格式刷</button></div>`)}
        ${this.group("w-font", "字体", html`<div class="stack f-font">
          <div class="line">
            <div class="sels">
              <label class="sel s1"><select aria-label="字体名称"><option>宋体</option></select>${caret}</label>
              <label class="sel s2"><select aria-label="字号"><option>11</option></select>${caret}</label>
            </div>
            <div class="pack"><button aria-label="增大字号">${growA(true)}</button><button aria-label="减小字号">${growA(false)}</button></div>
          </div>
          <div class="line">
            <div class="pack"><button class="b">B</button><button class="i">I</button><button class="wide"><span class="u">U</span>${caret}</button></div>
            <div class="pack"><button class="wide" aria-label="边框">${borderIcon}${caret}</button></div>
            <div class="pack"><button class="wide" aria-label="填充颜色">${fillIcon}${caret}</button><button class="wide" aria-label="字体颜色">${fontColorIcon}${caret}</button></div>
            <div class="pack"><button class="wide" aria-label="拼音指南">${wenIcon}${caret}</button></div>
          </div></div>`)}
        ${this.group("w-align", "对齐方式", html`
          <div class="stack f-align">
            <div class="line">
              <div class="pack"><button aria-label="顶端对齐">${vTop}</button><button class="lit" aria-label="垂直居中">${vMid}</button><button aria-label="底端对齐">${vBot}</button></div>
              <div class="pack"><button class="wide" aria-label="方向">${orientIcon}${caret}</button></div>
            </div>
            <div class="line">
              <div class="pack"><button aria-label="左对齐">${hLeft}</button><button aria-label="居中">${hMid}</button><button aria-label="右对齐">${hRight}</button></div>
              <div class="pack"><button aria-label="减少缩进">${indentIcon(false)}</button><button aria-label="增加缩进">${indentIcon(true)}</button></div>
            </div>
          </div>
          <div class="rule"></div>
          <div class="stack f-text"><button class="txt">${wrapIcon}自动换行</button><button class="txt">${mergeIcon}合并后居中${caret}</button></div>`)}
        ${this.group("w-num", "数字", html`<div class="stack f-font">
          <label class="sel s3"><select aria-label="数字格式"><option>常规</option></select>${caret}</label>
          <div class="line">
            <div class="pack"><button class="wide" aria-label="会计数字格式">${moneyIcon}${caret}</button><button class="pct">%</button><button class="comma">,</button></div>
            <div class="pack"><button aria-label="增加小数位数">${decimalIcon(false)}</button><button aria-label="减少小数位数">${decimalIcon(true)}</button></div>
          </div></div>`)}
        ${this.group("w-style", "样式", html`
          ${this.big(condIcon, "b-cond", "条件格式")}
          ${this.big(tableFormatIcon, "b-table", "套用", "表格格式")}
          <div class="gallery"><button class="sel-style">常规</button><button class="bad">差</button><button class="good">好</button><button class="neutral">适中</button></div>
          <div class="gscroll">
            <button aria-label="上一行"><svg width="12" height="8" viewBox="0 0 12 8"><path d="M0 8h12L6 0z" fill="#b3b3b3"/></svg></button>
            <button aria-label="下一行"><svg width="12" height="8" viewBox="0 0 12 8"><path d="M0 0h12L6 8z" fill="#4a7abb"/></svg></button>
            <button aria-label="其他"><svg width="14" height="13" viewBox="0 0 14 13"><path d="M0 1h14" stroke="#4a7abb" stroke-width="2"/><path d="M1 5h12l-6 8z" fill="#4a7abb"/></svg></button>
          </div>`, false)}
        ${this.group("w-cells", "单元格", html`${this.big(insertIcon, "b-cell", "插入")}${this.big(deleteIcon, "b-cell", "删除")}${this.big(formatIcon, "b-cell", "格式")}`, false)}
        ${this.group("w-edit", "编辑", html`
          <div class="list edit"><button>${sumIcon}自动求和${caret}</button><button>${fillDownIcon}填充${caret}</button><button>${eraseIcon}清除${caret}</button></div>
          ${this.big(sortIcon, "b-find", "排序和", "筛选")}${this.big(findIcon, "b-find", "查找和", "选择")}`, false)}
      </div>

      <div class="fbar">
        <input class="nb" aria-label="名称框" value="B5">
        <button class="nbtn" aria-label="名称列表"><svg width="16" height="9" viewBox="0 0 16 9"><path d="M0 0h16L8 9z" fill="#000"/></svg></button>
        <div class="pillwrap"><div class="pill"><span class="dot"></span><button class="fx" aria-label="插入函数">f<small>x</small></button></div></div>
        <input class="fin" aria-label="编辑栏" value="99">
        <button class="expand" aria-label="展开编辑栏"><svg width="20" height="24" viewBox="0 0 20 24"><path d="M2 2l8 7 8-7M2 13l8 7 8-7" fill="none" stroke="#000" stroke-width="4"/></svg></button>
      </div>

      <div class="main">
        <div class="sheet">
          <table>
            <colgroup><col class="c-head"><col class="c-a"><col class="c-b">${COLUMNS.slice(2).map(() => html`<col class="c-n">`)}</colgroup>
            <thead><tr>
              <th class="corner" aria-label="全选"><svg width="32" height="32" viewBox="0 0 32 32"><path d="M30 1v30H1z" fill="#e8edf5"/></svg></th>
              ${COLUMNS.map((c, i) => html`<th scope="col" class=${classMap({ hot: i < 2 })}>${c}</th>`)}
            </tr></thead>
            <tbody>${Array.from({ length: ROW_COUNT }, (_, r) => this.row(r))}</tbody>
          </table>
          <div class="frame"><div class="knob"></div></div>
        </div>
        <div class="vs">
          <div class="split"></div>
          <button aria-label="向上滚动"><svg width="28" height="14" viewBox="0 0 28 14"><path d="M0 14h28L14 0z" fill="#42517a"/></svg></button>
          <div class="vthumb"><svg width="10" height="10" viewBox="0 0 10 10"><path d="M0 1h10M0 4h10M0 7h10" stroke="#8290a5"/></svg></div>
          <div class="vrest"></div>
          <button aria-label="向下滚动"><svg width="28" height="14" viewBox="0 0 28 14"><path d="M0 0h28L14 14z" fill="#3c4a72"/></svg></button>
        </div>
      </div>

      <div class="bottom">
        <div class="nav">
          <button aria-label="第一张"><svg width="13" height="18" viewBox="0 0 13 18"><path d="M1 0v18" stroke="#15428b" stroke-width="2"/><path d="M13 0v18L3 9z" fill="#15428b"/></svg></button>
          <button aria-label="上一张"><svg width="10" height="18" viewBox="0 0 10 18"><path d="M10 0v18L0 9z" fill="#15428b"/></svg></button>
          <button aria-label="下一张"><svg width="10" height="18" viewBox="0 0 10 18"><path d="M0 0v18l10-9z" fill="#15428b"/></svg></button>
          <button aria-label="最后一张"><svg width="13" height="18" viewBox="0 0 13 18"><path d="M12 0v18" stroke="#15428b" stroke-width="2"/><path d="M0 0v18l10-9z" fill="#15428b"/></svg></button>
        </div>
        ${this.sheetTab("Sheet1", true)}${this.sheetTab("Sheet2", false)}${this.sheetTab("Sheet3", false)}
        <button class="newtab" aria-label="插入工作表"><svg width="52" height="36" viewBox="0 0 52 36">
          <path d="M14 0L1 30q-1 4 4 4H34L50 0" fill="#cfe0f7" stroke="#7f9cc6" stroke-width="2"/>
          <path d="M11 10h22v15l-5 5H15l-4-3z" fill="#e9eef8" stroke="#5d6c8e" stroke-width="2"/><path d="M33 22h-6v8z" fill="#4f5f87"/>
          <path d="M12 4l2 5 5-2-2 5 4 2-5 2 1 5-5-2-4 2 1-5-4-2 4-2-2-5 4 2z" fill="#fff3b8" stroke="#d9831c" stroke-width="2"/></svg></button>
        <div class="hs">
          <div class="hsplit"></div>
          <button aria-label="向左滚动"><svg width="14" height="26" viewBox="0 0 14 26"><path d="M14 0v26L0 13z" fill="#42517a"/></svg></button>
          <div class="hthumb"><svg width="10" height="10" viewBox="0 0 10 10"><path d="M1 0v10M4 0v10M7 0v10" stroke="#8290a5"/></svg></div>
          <div class="hrest"></div>
          <button aria-label="向右滚动"><svg width="14" height="26" viewBox="0 0 14 26"><path d="M0 0v26l14-13z" fill="#3c4a72"/></svg></button>
          <div class="hsplit"></div>
          <div class="endcap"></div>
        </div>
      </div>

      <footer class="status">
        <span class="ready">就绪</span>
        <div class="calc"><span>平均值: 52.25</span><span>计数: 10</span><span>求和: 209</span></div>
        <div class="sepbar"></div>
        <div class="views">
          <button class="lit" aria-label="普通"><svg width="30" height="24" viewBox="0 0 30 24"><rect x="1" y="1" width="28" height="22" fill="#fff" stroke="#666" stroke-width="2"/><path d="M10 1v22M19 1v22M1 8h28M1 15h28" stroke="#666" stroke-width="2"/></svg></button>
          <button aria-label="页面布局"><svg width="28" height="26" viewBox="0 0 28 26"><rect x="1" y="1" width="26" height="24" fill="#aab0b8" stroke="#666" stroke-width="2"/><rect x="8" y="6" width="12" height="15" fill="#fff" stroke="#666" stroke-width="2"/><path d="M11 10h6M11 13h6M11 16h6" stroke="#888"/></svg></button>
          <button aria-label="分页预览"><svg width="28" height="26" viewBox="0 0 28 26"><rect x="1" y="1" width="26" height="24" fill="#aab0b8" stroke="#666" stroke-width="2"/><path d="M2 2h17v15H2zM10 2v15" fill="#fff" stroke="#777" stroke-width="2"/></svg></button>
        </div>
        <div class="zoom">
          <output>100%</output>
          <button aria-label="缩小"><svg width="36" height="36" viewBox="0 0 36 36"><circle cx="18" cy="18" r="16" fill="#dfeafa" stroke="#44689d" stroke-width="2"/><path d="M4 18a14 14 0 0 1 28 0" fill="#fff"/><path d="M10 16h16v4H10z" fill="#46536a"/></svg></button>
          <input type="range" min="0" max="100" value="50" aria-label="显示比例">
          <button aria-label="放大"><svg width="36" height="36" viewBox="0 0 36 36"><circle cx="18" cy="18" r="16" fill="#dfeafa" stroke="#44689d" stroke-width="2"/><path d="M4 18a14 14 0 0 1 28 0" fill="#fff"/><path d="M9 16h7V9h4v7h7v4h-7v7h-4v-7H9z" fill="#46536a"/></svg></button>
        </div>
      </footer>
      <div class="edge"></div>
    </div>`;
  }
}
